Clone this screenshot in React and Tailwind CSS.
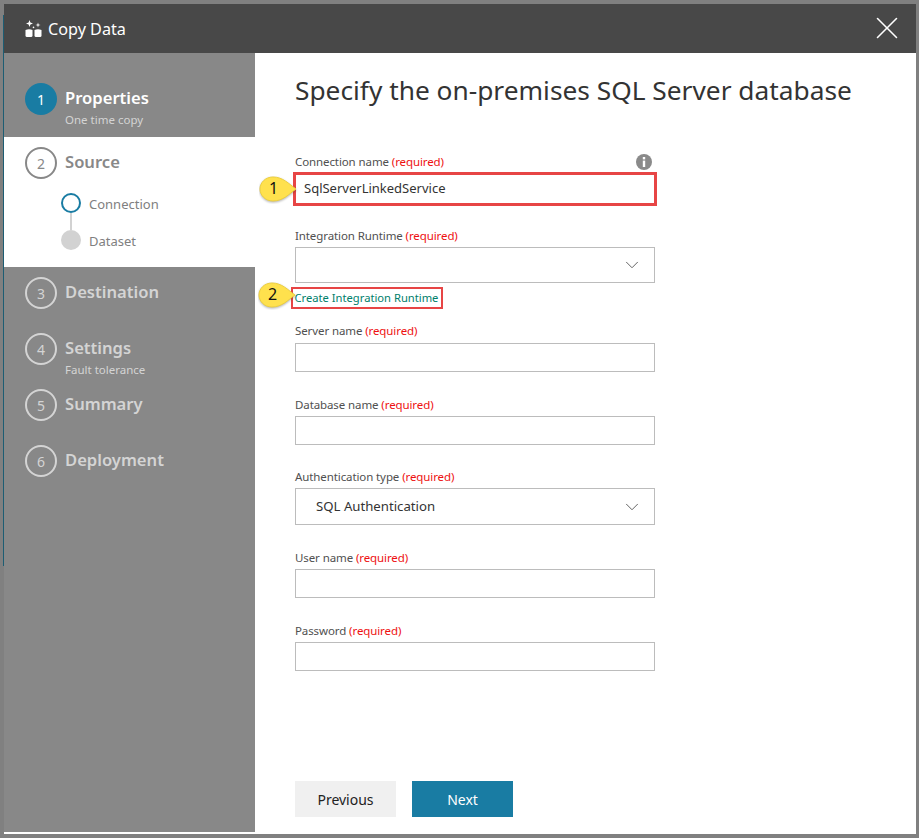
import React from 'react';
import { ChevronDown, X } from 'lucide-react';

const Req = () => <span className="text-[#ee1111]">(required)</span>;

const Label = ({ children }) => (
  <div className="h-[18px] text-[11.5px] tracking-[-0.1px] leading-[18px] text-[#505050]">
    {children} <Req />
  </div>
);

const TextBox = ({ className = '' }) => (
  <div className={`w-[360px] border border-[#bcbcbc] bg-white ${className}`} />
);

const Select = ({ value, className = '' }) => (
  <div className={`w-[360px] flex items-center justify-between border border-[#bcbcbc] bg-white pl-[20px] pr-[11px] text-[13.2px] text-[#333] ${className}`}>
    <span>{value}</span>
    <ChevronDown className="w-[22px] h-[22px] text-[#555]" strokeWidth={1} />
  </div>
);

const Callout = ({ n, className = '' }) => (
  <div className={`absolute flex items-center ${className}`}>
    <svg width="39" height="28" viewBox="0 0 39 28">
      <path d="M14 1 C24 1 30 8 37 13 C30 18 24 25 14 25 C6 25 1 19 1 13 C1 7 6 1 14 1 Z" fill="#ffe14d" stroke="#eccf3f" strokeWidth="1" style={{ filter: 'drop-shadow(0 1.5px 1px rgba(0,0,0,.3))' }} />
    </svg>
    <span className="absolute left-[10px] top-[0px] text-[16px] leading-[24px] text-[#111]">{n}</span>
  </div>
);

const CopyIcon = () => (
  <svg width="18" height="18" viewBox="0 0 18 18" fill="#fff">
    <path d="M0.5 10 Q4 8.6 7.5 10 V15.5 Q7.5 17 6 17 H2 Q0.5 17 0.5 15.5 Z" />
    <path d="M9.5 10 Q13 8.6 16.5 10 V15.5 Q16.5 17 15 17 H11 Q9.5 17 9.5 15.5 Z" />
    <path d="M4.5 0 L5.4 2.6 L8 3.5 L5.4 4.4 L4.5 7 L3.6 4.4 L1 3.5 L3.6 2.6 Z" />
    <path d="M13 2.4 L13.6 4.4 L15.6 5 L13.6 5.6 L13 7.6 L12.4 5.6 L10.4 5 L12.4 4.4 Z" />
    <circle cx="8.5" cy="7.4" r="0.8" />
  </svg>
);

const InfoDot = () => (
  <svg className="absolute right-[3px] top-[1px]" width="16" height="16" viewBox="0 0 16 16">
    <circle cx="8" cy="8" r="8" fill="#8a8a8a" />
    <rect x="6.8" y="3" width="2.4" height="2.4" fill="#fff" />
    <rect x="6.8" y="6.6" width="2.4" height="6.4" fill="#fff" />
  </svg>
);

const Step = ({ n, title, sub }) => (
  <div className="flex h-[56px] pl-[21px]">
    <div className="w-[32px] h-[32px] mt-[-1px] rounded-full border-2 border-[#d4d4d4] flex items-center justify-center text-[14px] text-[#d4d4d4]">{n}</div>
    <div className="ml-[8px] pt-[1px]">
      <div className="text-[16.6px] leading-[26px] font-semibold text-[#d4d4d4]">{title}</div>
      {sub && <div className="text-[11.5px] leading-[14px] text-[#d4d4d4] mt-[2px]">{sub}</div>}
    </div>
  </div>
);

export default function App() {
  return (
    <div className="relative w-[919px] h-[838px] bg-[#808080] pt-[4px] pl-[4px] pr-[3px] pb-[4px] flex flex-col font-['Noto_Sans',sans-serif]">
      <span className="absolute left-[3px] top-[15px] w-px h-[551px] bg-[#1d5d73]" />
      <div className="h-[49px] shrink-0 bg-[#484848] flex items-center pl-[21px] pr-[10px] text-white">
        <CopyIcon />
        <span className="ml-[5px] mt-[1px] text-[16.2px]">Copy Data</span>
        <X className="ml-auto mt-[-2px] w-[38px] h-[38px]" strokeWidth={1} />
      </div>
      <div className="flex flex-1 min-h-0 bg-white">
        <div className="w-[251px] shrink-0 bg-[#888888] mb-[2px]">
          <div className="flex h-[84px] pl-[21px] pt-[30px]">
            <div className="w-[32px] h-[32px] rounded-full bg-[#197ca3] flex items-center justify-center text-[14px] text-white">1</div>
            <div className="ml-[8px] pt-[2px]">
              <div className="text-[16.6px] leading-[26px] font-semibold text-white">Properties</div>
              <div className="text-[11.5px] leading-[14px] text-[#d4d4d4] mt-[2px]">One time copy</div>
            </div>
          </div>
          <div className="h-[130px] bg-white pt-[10px]">
            <div className="flex pl-[21px]">
              <div className="w-[32px] h-[32px] rounded-full border-2 border-[#888888] flex items-center justify-center text-[14px] text-[#888888]">2</div>
              <div className="ml-[8px] text-[16.6px] leading-[32px] font-semibold text-[#888888] mt-[-1px]">Source</div>
            </div>
            <div className="pl-[57px] mt-[14px]">
              <div className="flex items-center h-[20px]">
                <span className="w-[20px] h-[20px] rounded-full border-2 border-[#197ca3]" />
                <span className="ml-[8px] pt-[4px] text-[13px] text-[#808080]">Connection</span>
              </div>
              <div className="ml-[9px] w-[2px] h-[17px] bg-[#d2d2d2]" />
              <div className="flex items-center h-[20px]">
                <span className="w-[20px] h-[20px] rounded-full bg-[#d2d2d2]" />
                <span className="ml-[8px] pt-[4px] text-[13px] text-[#808080]">Dataset</span>
              </div>
            </div>
          </div>
          <div className="pt-[11px]">
            <Step n="3" title="Destination" />
            <Step n="4" title="Settings" sub="Fault tolerance" />
            <Step n="5" title="Summary" />
            <Step n="6" title="Deployment" />
          </div>
        </div>

        <div className="relative flex-1 pl-[40px] flex flex-col">
          <h1 className="mt-[17px] h-[40px] text-[26.3px] leading-[40px] text-[#333] whitespace-nowrap">Specify the on-premises SQL Server database</h1>

          <div className="relative mt-[43px] w-[360px]">
            <Label>Connection name</Label>
            <InfoDot />
          </div>
          <div className="mt-[1px] w-[364px] ml-[-2px] h-[34px] border-[3px] border-[#e74545] flex items-center pl-[8px] text-[13px] text-[#333]">SqlServerLinkedService</div>

          <div className="mt-[21px]"><Label>Integration Runtime</Label></div>
          <Select className="mt-[2px] h-[36px]" />
          <div className="mt-[4px] ml-[-4px] w-[152px] h-[22px] border-[2.5px] border-[#e74545] pl-[1.5px] text-[11.2px] leading-[17px] text-[#00806b] whitespace-nowrap">Create Integration Runtime</div>

          <div className="mt-[13px]"><Label>Server name</Label></div>
          <TextBox className="mt-[3px] h-[29px]" />

          <div className="mt-[24px]"><Label>Database name</Label></div>
          <TextBox className="mt-[2px] h-[29px]" />

          <div className="mt-[23px]"><Label>Authentication type</Label></div>
          <Select value="SQL Authentication" className="mt-[2px] h-[37px]" />

          <div className="mt-[24px]"><Label>User name</Label></div>
          <TextBox className="mt-[2px] h-[29px]" />

          <div className="mt-[24px]"><Label>Password</Label></div>
          <TextBox className="mt-[2px] h-[29px]" />

          <div className="mt-auto mb-[17px] flex gap-[16px] text-[14px]">
            <button className="w-[101px] h-[36px] bg-[#f0f0f0] text-[#222]">Previous</button>
            <button className="w-[101px] h-[36px] bg-[#197ca3] text-white">Next</button>
          </div>

          <Callout n="1" className="left-[4px] top-[123px]" />
          <Callout n="2" className="left-[3px] top-[229px]" />
        </div>
      </div>
    </div>
  );
}
